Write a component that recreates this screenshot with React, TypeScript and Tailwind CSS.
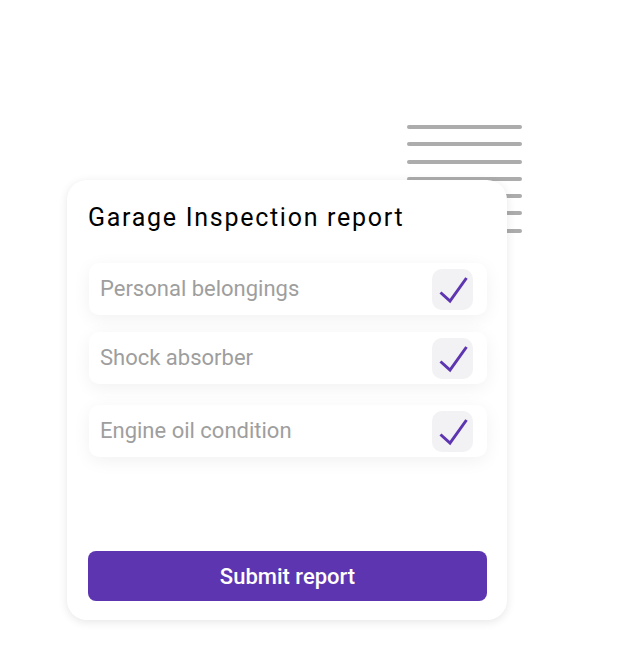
import React from "react";

const items = [
  { label: "Personal belongings", mt: "mt-[31px]" },
  { label: "Shock absorber", mt: "mt-[17px]" },
  { label: "Engine oil condition", mt: "mt-[21px]" },
];

function Check() {
  return (
    <div className="w-[41px] h-[41px] rounded-[10px] bg-[#f2f1f3] flex items-center justify-center shrink-0">
      <svg width="41" height="41" viewBox="0 0 41 41" fill="none">
        <polyline
          points="8.5,23.5 18,32 34.5,9"
          stroke="#5e35b1"
          strokeWidth="3"
          strokeLinecap="butt"
          strokeLinejoin="miter"
          fill="none"
        />
      </svg>
    </div>
  );
}

export default function App() {
  return (
    <div
      className="relative w-[636px] h-[669px] bg-white overflow-hidden"
      style={{ fontFamily: "Roboto, 'Liberation Sans', sans-serif" }}
    >
      <div className="absolute left-[407px] top-[125px] w-[115px] flex flex-col gap-[13.3px]">
        {Array.from({ length: 7 }).map((_, i) => (
          <div key={i} className="h-[4px] w-full rounded-full bg-[#acacac]" />
        ))}
      </div>
      <div className="pt-[180px] pl-[67px]">
        <div className="relative z-10 w-[440px] h-[440px] bg-white rounded-[20px] shadow-[0_2px_10px_rgba(0,0,0,0.10)] flex flex-col pl-[21px] pr-[20px] pt-[22px] pb-[19px]">
          <h1 className="pt-[2px] text-[25px] leading-[28px] font-normal tracking-[1.72px] text-black">
            Garage Inspection report
          </h1>
          {items.map((it) => (
            <div
              key={it.label}
              className={`${it.mt} h-[52px] ml-[1px] rounded-[10px] bg-white shadow-[0_4px_18px_rgba(0,0,0,0.06)] flex items-center justify-between pl-[11px] pr-[14px]`}
            >
              <span className="text-[22px] leading-[26px] text-[#9e9e9e]">{it.label}</span>
              <Check />
            </div>
          ))}
          <button className="mt-auto h-[50px] w-full rounded-[8px] bg-[#5e35b1] text-white text-[22px] font-medium">
            Submit report
          </button>
        </div>
      </div>
    </div>
  );
}
